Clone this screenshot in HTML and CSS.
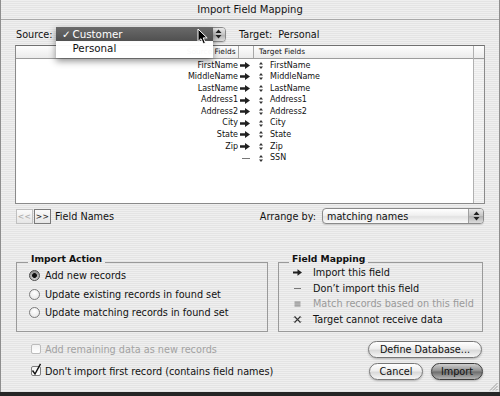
FILE: index.html
```html
<!DOCTYPE html>
<html>
<head>
<meta charset="utf-8">
<link rel="stylesheet" href="styles.css">
</head>
<body>
<div class="window">
  <div class="titlebar">Import Field Mapping</div>
  <div class="main">
    <div class="source-row">
      <span class="lbl src-lbl">Source:</span>
      <div class="popup source-popup">
        <span class="popup-text"></span>
        <span class="stepper"><svg width="7" height="10" viewBox="0 0 7 10"><path d="M3.5 0.5 L6.5 4 H0.5 Z M3.5 9.5 L6.5 6 H0.5 Z" fill="#222"/></svg></span>
        <div class="menu">
          <div class="menu-item selected"><span class="check">✓</span>Customer</div>
          <div class="menu-item"><span class="check"></span>Personal</div>
        </div>
        <svg class="cursor" width="12" height="17" viewBox="0 0 12 17"><path d="M1 1 L1 13.5 L4 10.7 L6.3 15.8 L8.4 14.9 L6.2 9.9 L10.2 9.9 Z" fill="#000" stroke="#fff" stroke-width="1"/></svg>
      </div>
      <span class="lbl target-lbl">Target:</span>
      <span class="lbl target-val">Personal</span>
    </div>

    <div class="table">
      <div class="cols">
        <div class="row head"><div class="c-src">Source Fields</div><div class="c-arr"></div><div class="c-tgt">Target Fields</div></div>
        <div class="row"><div class="c-src">FirstName</div><div class="c-arr"><svg class="arr" width="10" height="7" viewBox="0 0 10 7"><path d="M0 2.3 H5 V0 L10 3.5 L5 7 V4.7 H0 Z" fill="#222"/></svg></div><div class="c-tgt"><svg class="ud" width="4" height="7" viewBox="0 0 4 7"><path d="M0 2.6 L2 0 L4 2.6 Z M0 4.4 L2 7 L4 4.4 Z" fill="#333"/></svg><span>FirstName</span></div></div>
        <div class="row"><div class="c-src">MiddleName</div><div class="c-arr"><svg class="arr" width="10" height="7" viewBox="0 0 10 7"><path d="M0 2.3 H5 V0 L10 3.5 L5 7 V4.7 H0 Z" fill="#222"/></svg></div><div class="c-tgt"><svg class="ud" width="4" height="7" viewBox="0 0 4 7"><path d="M0 2.6 L2 0 L4 2.6 Z M0 4.4 L2 7 L4 4.4 Z" fill="#333"/></svg><span>MiddleName</span></div></div>
        <div class="row"><div class="c-src">LastName</div><div class="c-arr"><svg class="arr" width="10" height="7" viewBox="0 0 10 7"><path d="M0 2.3 H5 V0 L10 3.5 L5 7 V4.7 H0 Z" fill="#222"/></svg></div><div class="c-tgt"><svg class="ud" width="4" height="7" viewBox="0 0 4 7"><path d="M0 2.6 L2 0 L4 2.6 Z M0 4.4 L2 7 L4 4.4 Z" fill="#333"/></svg><span>LastName</span></div></div>
        <div class="row"><div class="c-src">Address1</div><div class="c-arr"><svg class="arr" width="10" height="7" viewBox="0 0 10 7"><path d="M0 2.3 H5 V0 L10 3.5 L5 7 V4.7 H0 Z" fill="#222"/></svg></div><div class="c-tgt"><svg class="ud" width="4" height="7" viewBox="0 0 4 7"><path d="M0 2.6 L2 0 L4 2.6 Z M0 4.4 L2 7 L4 4.4 Z" fill="#333"/></svg><span>Address1</span></div></div>
        <div class="row"><div class="c-src">Address2</div><div class="c-arr"><svg class="arr" width="10" height="7" viewBox="0 0 10 7"><path d="M0 2.3 H5 V0 L10 3.5 L5 7 V4.7 H0 Z" fill="#222"/></svg></div><div class="c-tgt"><svg class="ud" width="4" height="7" viewBox="0 0 4 7"><path d="M0 2.6 L2 0 L4 2.6 Z M0 4.4 L2 7 L4 4.4 Z" fill="#333"/></svg><span>Address2</span></div></div>
        <div class="row"><div class="c-src">City</div><div class="c-arr"><svg class="arr" width="10" height="7" viewBox="0 0 10 7"><path d="M0 2.3 H5 V0 L10 3.5 L5 7 V4.7 H0 Z" fill="#222"/></svg></div><div class="c-tgt"><svg class="ud" width="4" height="7" viewBox="0 0 4 7"><path d="M0 2.6 L2 0 L4 2.6 Z M0 4.4 L2 7 L4 4.4 Z" fill="#333"/></svg><span>City</span></div></div>
        <div class="row"><div class="c-src">State</div><div class="c-arr"><svg class="arr" width="10" height="7" viewBox="0 0 10 7"><path d="M0 2.3 H5 V0 L10 3.5 L5 7 V4.7 H0 Z" fill="#222"/></svg></div><div class="c-tgt"><svg class="ud" width="4" height="7" viewBox="0 0 4 7"><path d="M0 2.6 L2 0 L4 2.6 Z M0 4.4 L2 7 L4 4.4 Z" fill="#333"/></svg><span>State</span></div></div>
        <div class="row"><div class="c-src">Zip</div><div class="c-arr"><svg class="arr" width="10" height="7" viewBox="0 0 10 7"><path d="M0 2.3 H5 V0 L10 3.5 L5 7 V4.7 H0 Z" fill="#222"/></svg></div><div class="c-tgt"><svg class="ud" width="4" height="7" viewBox="0 0 4 7"><path d="M0 2.6 L2 0 L4 2.6 Z M0 4.4 L2 7 L4 4.4 Z" fill="#333"/></svg><span>Zip</span></div></div>
        <div class="row"><div class="c-src"></div><div class="c-arr"><svg class="arr" width="10" height="7" viewBox="0 0 10 7"><rect x="2" y="3" width="8" height="1" fill="#777"/></svg></div><div class="c-tgt"><svg class="ud" width="4" height="7" viewBox="0 0 4 7"><path d="M0 2.6 L2 0 L4 2.6 Z M0 4.4 L2 7 L4 4.4 Z" fill="#333"/></svg><span>SSN</span></div></div>
      </div>
      <div class="vscroll"><div class="corner"></div></div>
    </div>

    <div class="bottom-row">
      <div class="nav">
        <span class="navbtn disabled">&lt;&lt;</span>
        <span class="navbtn">&gt;&gt;</span>
        <span class="lbl fieldnames">Field Names</span>
      </div>
      <div class="arrange">
        <span class="lbl">Arrange by:</span>
        <div class="popup arrange-popup">
          <span class="popup-text">matching names</span>
          <span class="stepper"><svg width="7" height="10" viewBox="0 0 7 10"><path d="M3.5 0.5 L6.5 4 H0.5 Z M3.5 9.5 L6.5 6 H0.5 Z" fill="#222"/></svg></span>
        </div>
      </div>
    </div>

    <div class="groups">
      <fieldset class="group import-action">
        <legend>Import Action</legend>
        <div class="radios">
          <div class="radio-item"><span class="radio checked"></span><span>Add new records</span></div>
          <div class="radio-item"><span class="radio"></span><span>Update existing records in found set</span></div>
          <div class="radio-item"><span class="radio"></span><span>Update matching records in found set</span></div>
        </div>
      </fieldset>
      <fieldset class="group field-mapping">
        <legend>Field Mapping</legend>
        <div class="legend-list">
          <div class="legend-item"><svg class="licon" width="9" height="9" viewBox="0 0 9 9"><path d="M0 3.4 H4.5 V1.2 L9 4.5 L4.5 7.8 V5.6 H0 Z" fill="#222"/></svg><span>Import this field</span></div>
          <div class="legend-item"><svg class="licon" width="9" height="9" viewBox="0 0 9 9"><rect x="1" y="4" width="7" height="1" fill="#777"/></svg><span>Don’t import this field</span></div>
          <div class="legend-item dim"><svg class="licon" width="9" height="9" viewBox="0 0 9 9"><rect x="1.5" y="2.5" width="6" height="1.2" fill="#8a8a8a"/><rect x="1.5" y="4.4" width="6" height="1.2" fill="#8a8a8a"/><rect x="1.5" y="6.3" width="6" height="1.2" fill="#8a8a8a"/></svg><span>Match records based on this field</span></div>
          <div class="legend-item"><svg class="licon" width="9" height="9" viewBox="0 0 9 9"><path d="M1.5 1.5 L7.5 7.5 M7.5 1.5 L1.5 7.5" stroke="#333" stroke-width="1.1"/><path d="M0.5 3 L2.5 1 M6.5 8 L8.5 6 M6.5 1 L8.5 3 M0.5 6 L2.5 8" stroke="#777" stroke-width="0.8"/></svg><span>Target cannot receive data</span></div>
        </div>
      </fieldset>
    </div>

    <div class="footer">
      <div class="check-item disabled"><span class="checkbox"></span><span>Add remaining data as new records</span></div>
      <div class="btn-cell"><button class="btn define">Define Database...</button></div>
      <div class="check-item"><span class="checkbox"><svg class="tick" width="11" height="13" viewBox="0 0 11 13"><path d="M1.5 7.5 L4 11 L9.5 0.8" fill="none" stroke="#111" stroke-width="1.4"/></svg></span><span>Don't import first record (contains field names)</span></div>
      <div class="btn-cell btn-pair"><button class="btn">Cancel</button><button class="btn default">Import</button></div>
    </div>
  </div>
  <svg class="grip" width="9" height="9" viewBox="0 0 9 9"><path d="M8.5 1 L1 8.5 M8.5 4 L4 8.5 M8.5 7 L7 8.5" stroke="#888" stroke-width="0.8"/></svg>
</div>
</body>
</html>
```

FILE: styles.css
```css
html, body {
  margin: 0;
  padding: 0;
}
body {
  width: 500px;
  height: 396px;
  overflow: hidden;
  background: #262626;
  font-family: "DejaVu Sans", "Noto Sans", sans-serif;
  font-size: 9.7px;
  color: #111;
}
.window {
  position: relative;
  width: 500px;
  height: 392px;
  box-sizing: border-box;
  border-left: 1px solid #8e8e8e;
  border-right: 1px solid #8e8e8e;
  background: repeating-linear-gradient(to bottom, #efefef 0 1px, #e4e4e4 1px 2px);
}
.titlebar {
  height: 19px;
  border-bottom: 1px solid #a8a8a8;
  display: flex;
  align-items: center;
  justify-content: center;
  font-size: 10px;
  color: #141414;
}
.main {
  padding: 6px 14px 0 14px;
}
.lbl {
  white-space: nowrap;
}

/* source row */
.source-row {
  display: flex;
  align-items: center;
  height: 16px;
}
.src-lbl {
  width: 41px;
  padding-left: 1px;
}
.popup {
  position: relative;
  display: flex;
  align-items: center;
  height: 15px;
  box-sizing: border-box;
  border: 1px solid #8a8a8a;
  border-radius: 4px;
  background: linear-gradient(to bottom, #ffffff, #f0f0f0 45%, #e2e2e2 55%, #fafafa);
  box-shadow: 0 1px 1px rgba(0,0,0,0.15);
}
.popup-text {
  flex: 1;
  padding-left: 4px;
  white-space: nowrap;
}
.stepper {
  width: 14px;
  align-self: stretch;
  display: flex;
  align-items: center;
  justify-content: center;
  border-left: 1px solid #a0a0a0;
  border-radius: 0 3px 3px 0;
  background: linear-gradient(to bottom, #e8e8e8, #c4c4c4 50%, #b0b0b0 51%, #dcdcdc);
}
.source-popup {
  width: 169px;
}
.menu {
  position: absolute;
  left: -2px;
  top: -1px;
  width: 157px;
  padding-bottom: 3px;
  background: rgba(255,255,255,0.97);
  box-shadow: 0 3px 7px rgba(0,0,0,0.45);
  font-size: 10.3px;
  z-index: 2;
}
.menu-item {
  height: 14px;
  line-height: 14px;
  padding-left: 6px;
  white-space: nowrap;
}
.menu-item.selected {
  background: linear-gradient(to bottom, #6a6a6a, #505050);
  color: #fff;
}
.check {
  display: inline-block;
  width: 10.5px;
}
.cursor {
  position: absolute;
  left: 139px;
  top: 0px;
  z-index: 3;
}
.target-lbl {
  margin-left: 13px;
}
.target-val {
  margin-left: 6px;
}

/* table */
.table {
  margin-top: 3px;
  height: 159px;
  box-sizing: border-box;
  border: 1px solid #8a8a8a;
  border-top-color: #707070;
  display: flex;
  background: #fff;
  box-shadow: inset 0 1px 1px rgba(0,0,0,0.1);
}
.cols {
  flex: 1;
  display: flex;
  flex-direction: column;
}
.row {
  display: grid;
  grid-template-columns: 223px 15px 1fr;
  height: 11.6px;
  align-items: center;
  font-size: 8px;
  line-height: 11.6px;
}
.row.head {
  height: 13px;
  margin-bottom: 0.5px;
  box-sizing: border-box;
  border-bottom: 1px solid #9c9c9c;
  background: linear-gradient(to bottom, #fdfdfd, #ebebeb);
  font-size: 7.4px;
  line-height: 12px;
  align-items: stretch;
}
.row.head .c-src {
  border-right: 1px solid #a8a8a8;
  padding-right: 2.5px;
  overflow: hidden;
}
.row.head .c-arr {
  border-right: 1px solid #a8a8a8;
}
.row.head .c-tgt {
  padding-left: 5px;
}
.c-src {
  text-align: right;
  padding-right: 1px;
  white-space: nowrap;
}
.c-arr {
  display: flex;
  align-items: center;
  padding-left: 1px;
  height: 100%;
}
.c-tgt {
  display: flex;
  align-items: center;
  padding-left: 5px;
  white-space: nowrap;
}
.c-tgt span {
  margin-left: 7px;
}
.vscroll {
  width: 11px;
  box-sizing: border-box;
  border-left: 1px solid #b0b0b0;
  background: repeating-linear-gradient(to bottom, #f4f4f4 0 1px, #eaeaea 1px 2px);
}
.vscroll .corner {
  height: 13px;
  box-sizing: border-box;
  border-bottom: 1px solid #9c9c9c;
  background: linear-gradient(to bottom, #fdfdfd, #ebebeb);
}

/* bottom row */
.bottom-row {
  margin-top: 4px;
  height: 16px;
  display: flex;
  align-items: center;
  justify-content: space-between;
}
.nav {
  display: flex;
  align-items: center;
  gap: 1px;
  padding-left: 1px;
}
.navbtn {
  width: 17px;
  height: 15px;
  box-sizing: border-box;
  border: 1px solid #7a7a7a;
  display: flex;
  align-items: center;
  justify-content: center;
  font-size: 7.6px;
  letter-spacing: 0.3px;
  background: linear-gradient(to bottom, #fafafa, #e6e6e6);
  color: #222;
}
.navbtn.disabled {
  border-color: #c0c0c0;
  color: #a8a8a8;
}
.fieldnames {
  margin-left: 3px;
}
.arrange {
  display: flex;
  align-items: center;
  margin-right: 1px;
}
.arrange-popup {
  width: 162px;
  margin-left: 6px;
  height: 16px;
}

/* groups */
.groups {
  display: flex;
  gap: 10px;
  margin-top: 33px;
  padding-left: 1px;
}
.group {
  margin: 0;
  border: 1px solid #9a9a9a;
  padding: 0;
  min-width: 0;
}
.group legend {
  position: relative;
  top: -4px;
  padding: 0 3px;
  font-weight: bold;
  font-size: 9.2px;
  line-height: 11px;
  white-space: nowrap;
}
.import-action {
  width: 252px;
  box-sizing: border-box;
}
.import-action legend {
  margin-left: 11px;
}
.field-mapping {
  width: 205px;
  box-sizing: border-box;
}
.field-mapping legend {
  margin-left: 10px;
}
.radios {
  display: flex;
  flex-direction: column;
  gap: 3.7px;
  padding: 0 0 10px 12px;
}
.radio-item {
  display: flex;
  align-items: center;
  height: 15px;
  white-space: nowrap;
}
.radio {
  width: 11px;
  height: 11px;
  box-sizing: border-box;
  border-radius: 50%;
  border: 1px solid #7c7c7c;
  background: radial-gradient(circle at 50% 35%, #ffffff, #e2e2e2);
  margin-right: 5px;
  flex: none;
}
.radio.checked {
  border-color: #4a4a4a;
  background: radial-gradient(circle, #111 0 2.1px, transparent 2.6px), linear-gradient(to bottom, #8c8c8c, #cfcfcf);
}
.legend-list {
  margin-top: -3px;
  padding: 0 0 3.5px 14px;
}
.legend-item {
  display: flex;
  align-items: center;
  height: 15.5px;
  white-space: nowrap;
}
.licon {
  flex: none;
  margin-right: 11px;
}
.legend-item.dim {
  color: #9a9a9a;
}

/* footer */
.footer {
  margin-top: 9px;
  display: grid;
  grid-template-columns: 1fr auto;
  row-gap: 5px;
  align-items: center;
}
.check-item {
  display: flex;
  align-items: center;
  padding-left: 16px;
  white-space: nowrap;
}
.check-item.disabled {
  color: #a2a2a2;
}
.checkbox {
  position: relative;
  width: 10px;
  height: 10px;
  box-sizing: border-box;
  border: 1px solid #7e7e7e;
  border-radius: 2px;
  background: linear-gradient(to bottom, #f2f2f2, #ffffff);
  margin-right: 4px;
  flex: none;
}
.check-item.disabled .checkbox {
  border-color: #bcbcbc;
}
.tick {
  position: absolute;
  left: -1px;
  top: -4px;
}
.btn-cell {
  display: flex;
  justify-content: flex-end;
  margin-right: 3px;
}
.btn-pair {
  gap: 8px;
  margin-right: 2px;
}
.btn {
  height: 17px;
  box-sizing: border-box;
  border: 1px solid #777;
  border-radius: 9px;
  padding: 0;
  font-family: "DejaVu Sans", "Noto Sans", sans-serif;
  font-size: 9.7px;
  color: #111;
  background: linear-gradient(to bottom, #ffffff, #eeeeee 45%, #d9d9d9 55%, #f6f6f6);
  box-shadow: 0 1px 2px rgba(0,0,0,0.25);
}
.btn.define {
  width: 114px;
}
.btn-pair .btn {
  width: 54px;
}
.btn-pair .btn.default {
  width: 52px;
  border-color: #3c3c3c;
  background: linear-gradient(to bottom, #cfcfcf, #8c8c8c 48%, #6c6c6c 52%, #b4b4b4);
}
.grip {
  position: absolute;
  right: 1px;
  bottom: 1px;
}
```
